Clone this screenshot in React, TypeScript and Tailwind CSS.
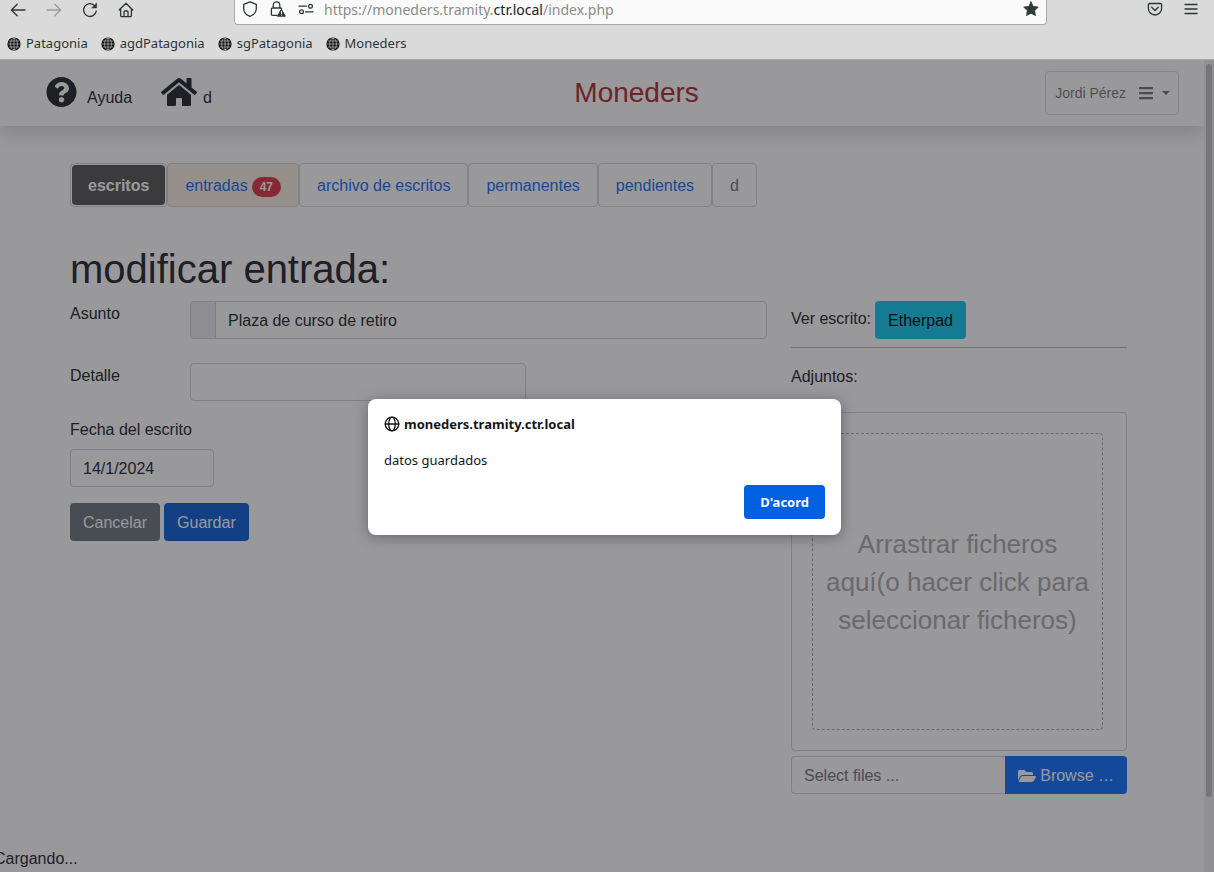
import type { ReactNode } from "react";
import { FaBars, FaFolderOpen, FaHome, FaQuestionCircle } from "react-icons/fa";

const bookmarks = ["Patagonia", "agdPatagonia", "sgPatagonia", "Moneders"];

function Glyph({ children, className = "" }: { children: ReactNode; className?: string }) {
  return (
    <svg
      viewBox="0 0 16 16"
      className={`block size-4 shrink-0 ${className}`}
      fill="none"
      stroke="currentColor"
      strokeWidth="1.3"
      strokeLinecap="round"
      strokeLinejoin="round"
      aria-hidden="true"
    >
      {children}
    </svg>
  );
}

function SiteGlobe() {
  return (
    <svg viewBox="0 0 14 14" className="block size-3.5 shrink-0" aria-hidden="true">
      <circle cx="7" cy="7" r="6.6" fill="#0c0c0d" />
      <g fill="none" stroke="#dadada" strokeWidth="0.6">
        <path d="M7 1v12M1 7h12M2 4h10M2 10h10" />
        <ellipse cx="7" cy="7" rx="3.4" ry="5.8" />
      </g>
    </svg>
  );
}

function BrowserBar() {
  return (
    <div className="border-b border-[#a8a8a8] bg-[#dadada] font-['Noto_Sans',sans-serif] text-[13px] text-[#2e3436]">
      <div className="flex h-[25px]">
        <div className="flex w-[234px] shrink-0 items-start gap-5 pt-0.5 pl-2.5">
          <button aria-label="Back">
            <Glyph><path d="M15 8H1.5M7.2 2.2 1.4 8l5.8 5.8" /></Glyph>
          </button>
          <button aria-label="Forward" disabled className="text-[#9b9b9b]">
            <Glyph><path d="M1 8h13.5M8.8 2.2 14.6 8l-5.8 5.8" /></Glyph>
          </button>
          <button aria-label="Reload">
            <Glyph>
              <path d="M14.3 9.2A6.4 6.4 0 1 1 12.6 3.6" />
              <path d="M14.6 1.3v4.6H10z" fill="currentColor" strokeWidth="0.6" />
            </Glyph>
          </button>
          <button aria-label="Home">
            <Glyph>
              <path d="M1.2 8 8 1.3 14.8 8M2.6 7v6.4c0 .7.5 1.2 1.2 1.2h8.4c.7 0 1.2-.5 1.2-1.2V7" />
              <path d="M6 14.4V10a1 1 0 0 1 1-1h2a1 1 0 0 1 1 1v4.4" />
            </Glyph>
          </button>
        </div>
        <div className="flex min-w-0 flex-1 items-start rounded-b-sm border border-t-0 border-[#a8a8a8] bg-[#fafafa] px-[7px] pt-px">
          <Glyph><path d="M8 .9 14.3 3.3v4.4c0 3.5-2.5 6.2-6.3 7.6-3.8-1.4-6.3-4.1-6.3-7.6V3.3z" /></Glyph>
          <Glyph className="ml-3">
            <path d="M7 14.4H2.6a1.2 1.2 0 0 1-1.2-1.2V8.200A1.2 1.2 0 0 1 2.6 7h7.8a1.2 1.2 0 0 1 1.2.9M3.200 7V4.200a3.300 3.300 0 0 1 6.600 0V7" />
            <path d="m11.500 8.600 3.800 6.600H7.700z" fill="currentColor" strokeWidth="1" />
            <path d="M11.500 10.600v2M11.500 14v.1" stroke="#fafafa" strokeWidth="1" />
          </Glyph>
          <Glyph className="ml-3">
            <path d="M1 5.200h7.500M7.500 10.800H15" />
            <circle cx="12.500" cy="5.200" r="1.900" />
            <circle cx="3.500" cy="10.800" r="1.900" />
          </Glyph>
          <div className="ml-2.5 min-w-0 flex-1 truncate text-[14px] leading-[18px] text-[#8b8b8c]">
            https://moneders.tramity.<span className="text-[#1c1b22]">ctr.local</span>/index.php
          </div>
          <button aria-label="Edit bookmark" className="text-[#2f3a34]">
            <Glyph><path d="m8 .8 2.200 4.600 5.100.7-3.700 3.500.9 5L8 12.200l-4.500 2.400.9-5L.7 6.100l5.100-.7z" fill="currentColor" strokeWidth="0.8" /></Glyph>
          </button>
        </div>
        <div className="flex w-[167px] shrink-0 items-start justify-end gap-5 pt-px pr-[15px]">
          <button aria-label="Pocket">
            <Glyph>
              <path d="M2.600 2.500h10.800c.7 0 1.200.5 1.200 1.200v3.700a6.600 6.600 0 0 1-13.200 0V3.700c0-.7.500-1.200 1.200-1.200z" />
              <path d="m4.700 6.300 3.300 3.200 3.300-3.200" />
            </Glyph>
          </button>
          <button aria-label="Menu">
            <Glyph><path d="M2 3.500h12M2 8h12M2 12.500h12" /></Glyph>
          </button>
        </div>
      </div>
      <nav className="flex h-[34px] items-center gap-[13px] pt-1 pl-[7px]">
        {bookmarks.map((name) => (
          <a key={name} href="#" className="flex items-center gap-[5px]">
            <SiteGlobe />
            {name}
          </a>
        ))}
      </nav>
    </div>
  );
}

function PageHeader() {
  return (
    <header className="flex h-[66px] items-center justify-between bg-white pr-[25px] pl-[46px] shadow-[0_8px_16px_rgba(0,0,0,0.15)]">
      <div className="flex items-end gap-[29px] pb-0.5">
        <a href="#" className="flex items-end gap-2.5">
          <FaQuestionCircle className="h-8 w-[31px]" />
          <span className="leading-5">Ayuda</span>
        </a>
        <a href="#" className="flex items-end gap-1.5">
          <FaHome className="h-8 w-9" />
          <span className="leading-5">d</span>
        </a>
      </div>
      <div className="flex-1 pl-4 text-center text-[28px] leading-8 text-[#b02a30]">Moneders</div>
      <button className="flex h-11 items-center rounded border border-black/15 pr-2 pl-[9px] text-[14px] text-black/55">
        Jordi Pérez
        <FaBars className="ml-3 size-4" />
        <svg viewBox="0 0 8 4" className="ml-2 h-1 w-2" fill="currentColor" aria-hidden="true">
          <path d="M0 0h8L4 4z" />
        </svg>
      </button>
    </header>
  );
}

function Tabs() {
  const tab = "flex h-11 items-center rounded border border-[#d3d6d9] px-[17px] pt-0.5";
  return (
    <nav className="flex text-[#0d6efd]">
      <a href="#" className="flex h-11 rounded border border-[#d3d6d9] p-px">
        <span className="flex items-center rounded bg-[#555] px-4 pt-0.5 font-bold text-white">escritos</span>
      </a>
      <a href="#" className={`${tab} gap-1 bg-[#faf0e6]`}>
        entradas
        <span className="mt-0.5 rounded-full bg-[#dc3545] px-2 text-xs leading-5 font-bold text-white">47</span>
      </a>
      <a href="#" className={tab}>archivo de escritos</a>
      <a href="#" className={tab}>permanentes</a>
      <a href="#" className={tab}>pendientes</a>
      <span className={`${tab} text-[#6c757d]`}>d</span>
    </nav>
  );
}

function EntryForm() {
  const input = "h-[38px] min-w-0 rounded border border-[#ced4da] bg-white px-3 pt-0.5";
  const button = "h-[38px] rounded px-[13px] pt-0.5 text-white";
  return (
    <form className="min-w-0" onSubmit={(e) => e.preventDefault()}>
      <div className="flex">
        <label htmlFor="asunto" className="w-[120px] shrink-0">Asunto</label>
        <div className="flex min-w-0 flex-1">
          <span className="w-[25px] shrink-0 rounded-l border border-r-0 border-[#ced4da] bg-[#e9ecef]" />
          <input id="asunto" defaultValue="Plaza de curso de retiro" className={`${input} flex-1 rounded-l-none`} />
        </div>
      </div>
      <div className="mt-6 flex">
        <label htmlFor="detalle" className="w-[120px] shrink-0">Detalle</label>
        <input id="detalle" className={`${input} w-[336px]`} />
      </div>
      <div className="mt-4 flex flex-col items-start gap-1.5">
        <label htmlFor="fecha">Fecha del escrito</label>
        <input id="fecha" defaultValue="14/1/2024" className={`${input} w-36`} />
      </div>
      <div className="mt-4 flex gap-1">
        <button type="button" className={`${button} bg-[#6c757d]`}>Cancelar</button>
        <button type="submit" className={`${button} bg-[#0b5ed7]`}>Guardar</button>
      </div>
    </form>
  );
}

function Attachments() {
  return (
    <aside className="min-w-0">
      <div className="flex items-center gap-1">
        <span className="pb-0.5">Ver escrito:</span>
        <button className="h-[38px] rounded bg-[#0dcaf0] px-[13px] pt-0.5 text-black">Etherpad</button>
      </div>
      <hr className="mt-2 border-[#b5b6b8]" />
      <p className="mt-4">Adjuntos:</p>
      <div className="mt-[22px] rounded border border-[#ced4da] p-5 pr-[23px]">
        <div className="flex h-[297px] items-center justify-center rounded border border-dashed border-[#aaa] px-3 text-center text-[26px] leading-[38px] text-[#aaa]">
          Arrastrar ficheros aquí(o hacer click para seleccionar ficheros)
        </div>
      </div>
      <div className="mt-[5px] flex">
        <input
          aria-label="Select files"
          placeholder="Select files ..."
          className="h-[38px] min-w-0 flex-1 rounded-l border border-r-0 border-[#ced4da] px-3 pt-0.5 placeholder:text-[#6c757d]"
        />
        <button className="flex h-[38px] items-center gap-1 rounded-r bg-[#0d6efd] px-[13px] pt-0.5 text-white">
          <FaFolderOpen className="size-[18px]" />
          Browse …
        </button>
      </div>
    </aside>
  );
}

function SavedDialog() {
  return (
    <div className="absolute inset-0 flex items-center justify-center bg-[rgba(28,27,34,0.45)] pt-0.5 pr-[5px]">
      <div
        role="alertdialog"
        aria-labelledby="dialog-site"
        aria-describedby="dialog-message"
        className="w-[473px] rounded-lg bg-white p-4 font-['Noto_Sans',sans-serif] text-[13px] leading-[18px] text-[#15141a] shadow-[0_2px_14px_rgba(28,27,34,0.4)]"
      >
        <h2 id="dialog-site" className="flex items-center gap-1 font-bold">
          <Glyph>
            <circle cx="8" cy="8" r="6.800" />
            <ellipse cx="8" cy="8" rx="3.300" ry="6.800" />
            <path d="M1.200 8h13.600" />
          </Glyph>
          moneders.tramity.ctr.local
        </h2>
        <p id="dialog-message" className="mt-[18px]">datos guardados</p>
        <div className="mt-4 flex justify-end">
          <button className="h-[34px] rounded bg-[#0061e0] px-4 font-bold text-[#fbfbfe]">D'acord</button>
        </div>
      </div>
    </div>
  );
}

export default function App() {
  return (
    <div className="flex min-h-screen flex-col">
      <BrowserBar />
      <main className="relative flex flex-1 bg-white font-['Liberation_Sans',Arial,sans-serif] text-base leading-[26px] text-[#212529]">
        <div className="min-w-0 flex-1 overflow-hidden">
          <PageHeader />
          <div className="pt-[37px] pr-[77px] pl-[70px]">
            <Tabs />
            <h1 className="mt-[38px] mb-2 text-[40px] leading-[48px]">modificar entrada:</h1>
            <div className="grid grid-cols-[minmax(0,1fr)_336px] gap-6">
              <EntryForm />
              <Attachments />
            </div>
          </div>
          <p className="mt-[52px] -ml-1.5">Cargando...</p>
        </div>
        <div className="w-2.5 shrink-0 bg-[#f0f0f0] px-0.5 pt-1">
          <div className="h-[733px] rounded-full bg-[#c1c1c1]" />
        </div>
        <SavedDialog />
      </main>
    </div>
  );
}
